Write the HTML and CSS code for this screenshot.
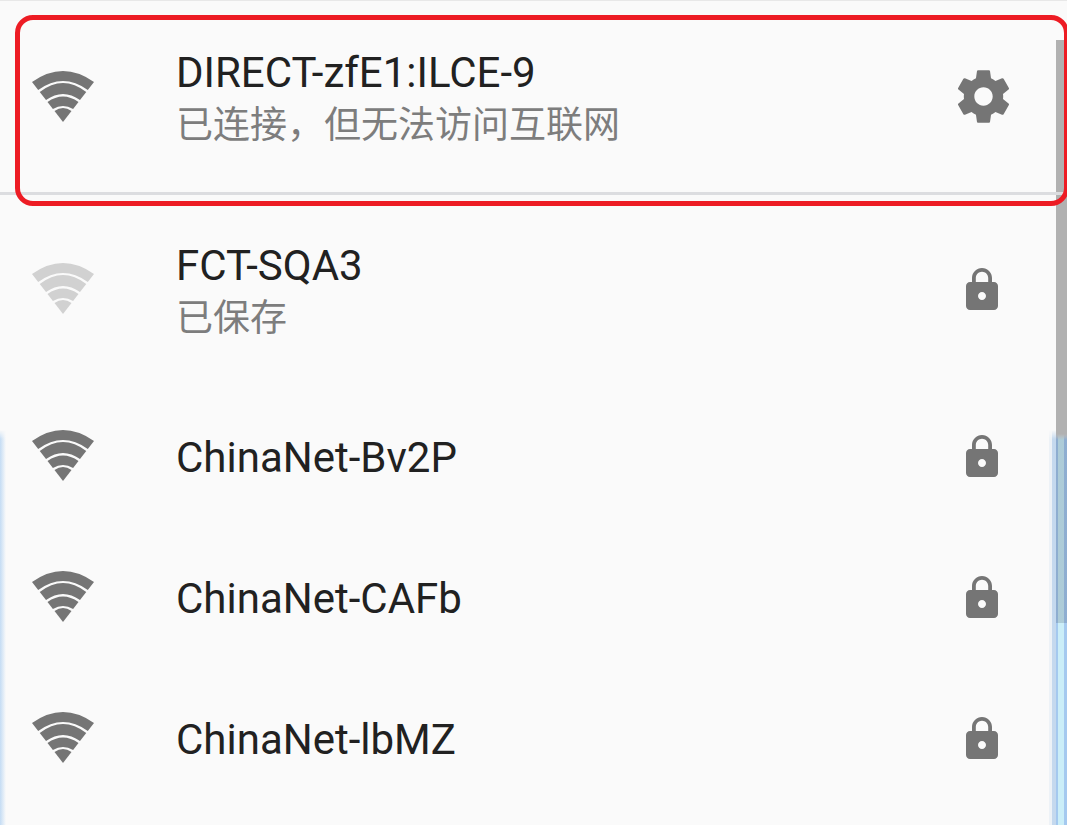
FILE: index.html
```html
<!DOCTYPE html>
<html lang="zh">
<head>
<meta charset="utf-8">
<title>WLAN</title>
<link rel="stylesheet" href="styles.css">
</head>
<body>
<svg class="defs" width="0" height="0">
  <defs>
    <symbol id="wifi" viewBox="0 0 62 52">
      <path d="M0 11Q31 -11 62 11L55.800 19Q31 1 6.200 19Z"/>
      <path d="M7.750 21Q31 3 54.250 21L48 29Q31 17 14 29Z"/>
      <path d="M15.500 31Q31 20 46.500 31L41.100 38Q31 32 20.900 38Z"/>
      <path d="M22.500 40Q31 34 39.500 40L31 51Z"/>
    </symbol>
    <symbol id="lock" viewBox="0 0 24 24">
      <path d="M18 8h-1V6c0-2.760-2.240-5-5-5S7 3.240 7 6v2H6c-1.100 0-2 .9-2 2v10c0 1.100.9 2 2 2h12c1.100 0 2-.9 2-2V10c0-1.100-.9-2-2-2zm-6 9c-1.100 0-2-.9-2-2s.9-2 2-2 2 .9 2 2-.9 2-2 2zm3.100-9H8.900V6c0-1.710 1.390-3.100 3.100-3.100 1.710 0 3.100 1.390 3.100 3.100v2z"/>
    </symbol>
    <symbol id="gear" viewBox="0 0 24 24">
      <path d="M19.430 12.980c.04-.32.07-.64.07-.98s-.03-.66-.07-.98l2.110-1.650c.19-.15.240-.42.120-.64l-2-3.460c-.12-.22-.39-.3-.61-.22l-2.490 1c-.52-.4-1.080-.73-1.690-.98l-.38-2.650C14.460 2.180 14.250 2 14 2h-4c-.25 0-.46.180-.49.420l-.38 2.650c-.61.250-1.170.59-1.690.98l-2.490-1c-.23-.09-.49 0-.61.220l-2 3.460c-.13.220-.07.490.12.640l2.110 1.650c-.04.320-.07.650-.07.980s.03.660.07.980l-2.110 1.650c-.19.150-.24.420-.12.640l2 3.460c.12.220.39.300.61.220l2.490-1c.52.400 1.080.730 1.690.980l.38 2.650c.03.240.24.420.49.420h4c.25 0 .46-.180.49-.420l.38-2.650c.61-.250 1.170-.590 1.690-.980l2.490 1c.23.090.49 0 .61-.220l2-3.460c.12-.220.070-.490-.12-.640l-2.110-1.650zM12 15.500c-1.930 0-3.500-1.570-3.500-3.500s1.570-3.500 3.500-3.500 3.500 1.570 3.500 3.500-1.570 3.500-3.500 3.500z"/>
    </symbol>
  </defs>
</svg>
<div class="edge edge-left"></div>
<div class="edge edge-right"></div>
<div class="scrollbar"></div>
<main class="list">
  <section class="row row-first">
    <svg class="wifi"><use href="#wifi"/></svg>
    <div class="text">
      <div class="name">DIRECT-zfE1:ILCE-9</div>
      <div class="status">已连接，但无法访问互联网</div>
    </div>
    <svg class="gear"><use href="#gear"/></svg>
  </section>
  <section class="row row-second">
    <svg class="wifi wifi-weak"><use href="#wifi"/></svg>
    <div class="text">
      <div class="name">FCT-SQA3</div>
      <div class="status">已保存</div>
    </div>
    <svg class="lock"><use href="#lock"/></svg>
  </section>
  <section class="row row-plain">
    <svg class="wifi"><use href="#wifi"/></svg>
    <div class="text"><div class="name">ChinaNet-Bv2P</div></div>
    <svg class="lock"><use href="#lock"/></svg>
  </section>
  <section class="row row-plain">
    <svg class="wifi"><use href="#wifi"/></svg>
    <div class="text"><div class="name">ChinaNet-CAFb</div></div>
    <svg class="lock"><use href="#lock"/></svg>
  </section>
  <section class="row row-plain">
    <svg class="wifi"><use href="#wifi"/></svg>
    <div class="text"><div class="name">ChinaNet-lbMZ</div></div>
    <svg class="lock"><use href="#lock"/></svg>
  </section>
</main>
<div class="highlight"></div>
</body>
</html>
```
FILE: styles.css
```css
html, body {
  margin: 0;
  padding: 0;
  width: 1067px;
  height: 825px;
  overflow: hidden;
  background: #fafafa;
}
.defs { position: absolute; }
.list {
  position: relative;
  font-family: Roboto, "Noto Sans CJK SC", sans-serif;
  border-top: 1px solid #e8e8e8;
}
.row {
  display: flex;
  align-items: center;
  padding-left: 32px;
  padding-right: 56px;
}
.row-first { height: 191px; border-bottom: 3px solid #dcdde0; }
.row-second { height: 192px; }
.row-plain { height: 141px; }
.wifi {
  width: 62px;
  height: 52px;
  fill: #757575;
  flex: none;
  margin-bottom: 3px;
}
.row-first .wifi { margin-top: 1px; margin-bottom: 0; }
.row-second .wifi { margin-bottom: 4px; }
.wifi-weak { fill: #d1d1d1; }
.text {
  flex: 1;
  margin-left: 82px;
}
.row-first .text { margin-top: 6px; }
.row-second .text { margin-top: 2px; }
.name {
  font-size: 42px;
  line-height: 53px;
  color: #212121;
}
.status {
  font-size: 37px;
  line-height: 54px;
  color: #7d7d7d;
}
.gear {
  width: 63px;
  height: 63px;
  fill: #757575;
  flex: none;
  margin-right: -4px;
}
.lock {
  width: 48px;
  height: 48px;
  fill: #757575;
  flex: none;
  margin-right: 5px;
  margin-bottom: 2px;
}
.scrollbar {
  position: absolute;
  left: 1056px;
  top: 40px;
  width: 11px;
  height: 583px;
  background: linear-gradient(to bottom, #b1b1b1 0, #b1b1b1 394px, rgba(40, 50, 70, 0.18) 400px);
}
.edge {
  position: absolute;
  top: 430px;
  bottom: 0;
  -webkit-mask-image: linear-gradient(to bottom, transparent 0, #000 9px);
  mask-image: linear-gradient(to bottom, transparent 0, #000 9px);
}
.edge-left {
  left: 0;
  width: 6px;
  background: linear-gradient(to right, #c4dcf4, #fafafa);
}
.edge-right {
  left: 1049px;
  width: 18px;
  background: linear-gradient(to right, #edf2f7 0, #edf2f7 3px, #c5d9ee 3px, #c5d9ee 7px, #a5c9ef 7px, #a5c9ef 9px, #cbeef8 9px, #cbeef8 15px, #a5c9ef 15px);
}
.highlight {
  position: absolute;
  left: 15px;
  top: 15px;
  width: 1054px;
  height: 191px;
  box-sizing: border-box;
  border: 5px solid #ed1c24;
  border-radius: 18px;
}
```
